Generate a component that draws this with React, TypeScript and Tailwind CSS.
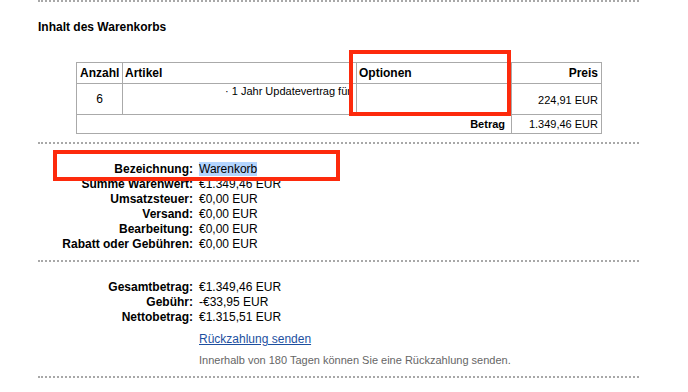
const Dotted = ({ className = "" }: { className?: string }) => (
  <div className={`w-[601px] border-t-2 border-dotted border-[#a8a8a8] ${className}`} />
);

const summary = [
  { label: "Summe Warenwert:", value: "€1.349,46 EUR" },
  { label: "Umsatzsteuer:", value: "€0,00 EUR" },
  { label: "Versand:", value: "€0,00 EUR" },
  { label: "Bearbeitung:", value: "€0,00 EUR" },
  { label: "Rabatt oder Gebühren:", value: "€0,00 EUR" },
];

const totals = [
  { label: "Gesamtbetrag:", value: "€1.349,46 EUR" },
  { label: "Gebühr:", value: "-€33,95 EUR" },
  { label: "Nettobetrag:", value: "€1.315,51 EUR" },
];

const Row = ({ label, value }: { label: string; value: React.ReactNode }) => (
  <>
    <div className="text-right font-bold">{label}</div>
    <div className="pl-[6px]">{value}</div>
  </>
);

const App = () => {
  return (
    <div className="h-[392px] w-[688px] overflow-hidden bg-white font-['Liberation_Sans',Arial,sans-serif] text-black">
      <div className="ml-[38px] w-[601px]">
        <Dotted />
        <h2 className="mt-[18px] text-[12px] font-bold leading-[14px]">Inhalt des Warenkorbs</h2>

        <div className="relative ml-[38px] mt-[28px] w-[525px]">
          <table className="w-[525px] table-fixed border-collapse border border-[#aaaaaa] text-[11px] leading-[13px]">
            <colgroup>
              <col className="w-[46px]" />
              <col className="w-[234px]" />
              <col className="w-[155px]" />
              <col className="w-[90px]" />
            </colgroup>
            <thead>
              <tr className="h-[21px] text-[12px] font-bold">
                <th className="border border-[#aaaaaa] pl-[3px] text-left">Anzahl</th>
                <th className="border border-[#aaaaaa] pl-[2px] text-left">Artikel</th>
                <th className="border border-[#aaaaaa] pl-[2px] text-left">Optionen</th>
                <th className="border border-[#aaaaaa] pr-[3px] text-right">Preis</th>
              </tr>
            </thead>
            <tbody>
              <tr className="h-[31px]">
                <td className="border border-[#aaaaaa] text-center text-[12px]">6</td>
                <td className="overflow-hidden whitespace-nowrap border border-[#aaaaaa] pl-[102px] pt-px align-top">
                  · 1 Jahr Updatevertrag für
                </td>
                <td className="border border-[#aaaaaa]" />
                <td className="border border-[#aaaaaa] pr-[3px] pt-[2px] text-right">224,91 EUR</td>
              </tr>
              <tr className="h-[19px]">
                <td colSpan={3} className="border border-[#aaaaaa] pr-[6px] text-right font-bold">
                  Betrag
                </td>
                <td className="border border-[#aaaaaa] pr-[3px] text-right">1.349,46 EUR</td>
              </tr>
            </tbody>
          </table>
          <div className="absolute left-[273px] top-[-12px] h-[66px] w-[162px] border-4 border-[#fd2a0c]" />
        </div>

        <Dotted className="mt-[8px]" />

        <div className="relative mt-[18px] grid grid-cols-[155px_1fr] text-[12px] leading-[15px]">
          <Row label="Bezeichnung:" value={<span className="bg-[#b4d5fe]">Warenkorb</span>} />
          {summary.map((r) => (
            <Row key={r.label} label={r.label} value={r.value} />
          ))}
          <div className="absolute left-[15px] top-[-12px] h-[31px] w-[287px] border-4 border-[#fd2a0c]" />
        </div>

        <Dotted className="mt-[8px]" />

        <div className="mt-[18px] grid grid-cols-[155px_1fr] text-[12px] leading-[15px]">
          {totals.map((r) => (
            <Row key={r.label} label={r.label} value={r.value} />
          ))}
        </div>
        <div className="ml-[161px] mt-[7px] text-[12px] leading-[15px]">
          <a href="#" className="text-[#1d4f9f] underline">
            Rückzahlung senden
          </a>
        </div>
        <div className="ml-[161px] mt-[6px] text-[11px] leading-[14px] text-[#666666]">
          Innerhalb von 180 Tagen können Sie eine Rückzahlung senden.
        </div>

        <Dotted className="mt-[9px]" />
      </div>
    </div>
  );
};

export default App;
